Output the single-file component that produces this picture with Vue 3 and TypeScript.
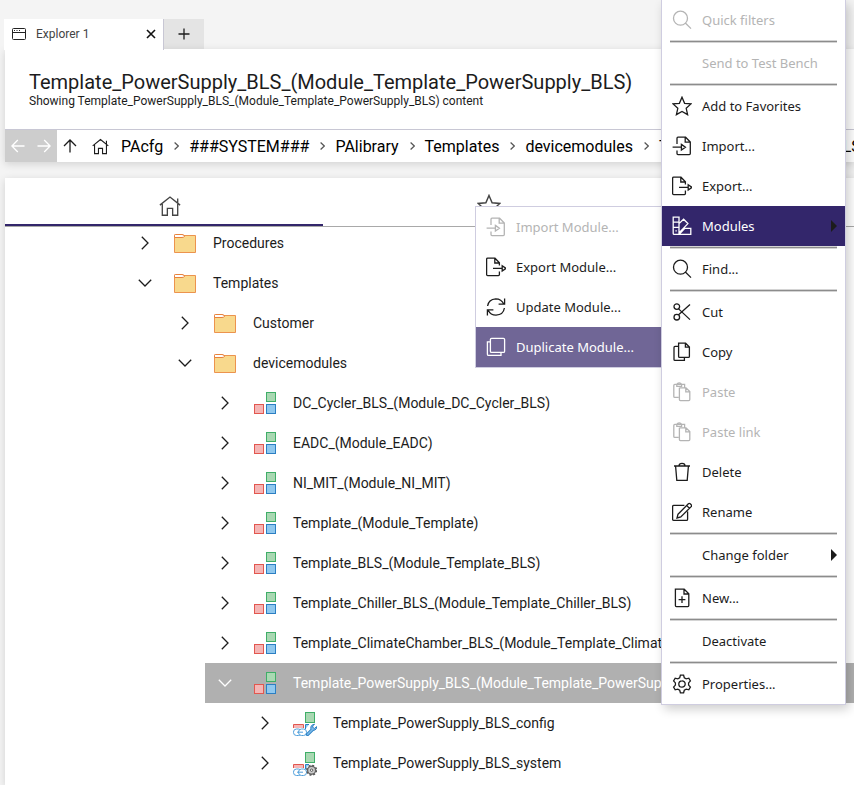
<script setup lang="ts">
type IconName =
  | 'search' | 'star' | 'import' | 'export' | 'swatch' | 'cut' | 'copy' | 'paste'
  | 'trash' | 'rename' | 'new' | 'gear' | 'refresh' | 'duplicate' | 'home'

interface MenuEntry {
  label?: string
  icon?: IconName
  disabled?: boolean
  active?: boolean
  arrow?: boolean
  separator?: boolean
}

interface TreeNode {
  label: string
  level: number
  open?: boolean
  selected?: boolean
  icon: 'folder' | 'module' | 'config' | 'system'
}

const iconPaths: Record<IconName, string> = {
  search: 'M8.5 1.2a7 7 0 1 0 0 14a7 7 0 1 0 0-14M13.6 13.2L19 18.6',
  star: 'M10 1.2L12.6 7.3L19 7.9L14.2 12.3L15.6 18.6L10 15.4L4.4 18.6L5.8 12.3L1 7.9L7.4 7.3Z',
  import: 'M5 8V2.2Q5 1.2 6 1.2H13.6L18.3 6V17.6Q18.3 18.6 17.3 18.6H6Q5 18.6 5 17.6V14.4M13.2 1.4V6.2H18.2M.6 11.2H9.2M9.4 8.4L13.4 11.2L9.4 14Z',
  export: 'M13.4 8.6V5.8L9 1.2H1.6Q.6 1.2 .6 2.2V17.6Q.6 18.6 1.6 18.6H12.4Q13.4 18.6 13.4 17.6V14.4M8.8 1.4V6H13.2M7 11.4H16M16.2 8.8L20 11.4L16.2 14Z',
  swatch: 'M1.2 1.2H7V18.4H2.2Q1.2 18.4 1.2 17.4ZM1.2 6.2H7M1.2 11.4H7M3.4 14.8H4.8M7 7.6L11.6 3.2L15.9 7.6L7.2 16.8M7.2 18.4H18.8V12.4H11.6M7.2 18.4L12.8 12.4',
  cut: 'M4.8 1.8a2.8 2.8 0 1 0 0 5.6a2.8 2.8 0 1 0 0-5.6M4.8 12.4a2.8 2.8 0 1 0 0 5.6a2.8 2.8 0 1 0 0-5.6M6.6 6.9L18 17.6M6.6 12.8L18 2.4',
  copy: 'M6.6 1.2H13.6L17.4 5V14.4Q17.4 15.4 16.4 15.4H7.6Q6.6 15.4 6.6 14.4ZM13.4 1.4V5.2H17.2M6.4 4.4H3Q2 4.4 2 5.4V17.4Q2 18.4 3 18.4H12.4V15.6',
  paste: 'M6.6 15.4H2.8Q1.8 15.4 1.8 14.4V3.4Q1.8 2.4 2.8 2.4H12.6V5.2M4.8 2.4V4.4H9.6V2.4Q8.8 .8 7.2 .8T4.8 2.4M7.4 5.8H14L17.8 9.6V17.6Q17.8 18.6 16.8 18.6H8.4Q7.4 18.6 7.4 17.6V5.8M13.8 6V9.8H17.6',
  trash: 'M2 4H18M7 3.8Q7 1.4 10 1.4T13 3.8M3.6 4.2L4.8 18.4H15.2L16.4 4.2',
  rename: 'M12.4 3.4H1.8Q.6 3.4 .6 4.6V17.2Q.6 18.4 1.8 18.4H14.4Q15.6 18.4 15.6 17.2V9.4M6 12.2L16.4 1.8Q17.2 1 18.2 1.8L19.2 2.8Q20 3.8 19.2 4.6L8.8 15L5 16ZM14.8 3.6L17.4 6.2',
  new: 'M3.4 1.2H12.2L16.8 5.8V17.6Q16.8 18.6 15.8 18.6H4.4Q3.4 18.6 3.4 17.6ZM12 1.4V6H16.6M10 8.2V15M6.6 11.6H13.4',
  gear: 'M8.4 1.2H11.6L12.3 3.7L14.2 4.8L16.8 4.2L18.4 7L16.6 8.9V11.1L18.4 13L16.8 15.8L14.2 15.2L12.3 16.3L11.6 18.8H8.4L7.7 16.3L5.8 15.2L3.2 15.8L1.600 13L3.400 11.100V8.900L1.600 7L3.200 4.200L5.800 4.800L7.700 3.700ZM10 6.800a3.200 3.200 0 1 0 0 6.400a3.200 3.200 0 1 0 0-6.400',
  refresh: 'M1.6 9Q2.4 2.4 9.8 1.8Q15.4 1.8 17.8 7M18.6 1.4V7.2H12.6M18.4 11Q17.4 17.8 10 18.2Q4.6 18.2 2 13M1.4 18.6V12.8H7.4',
  duplicate: 'M5.6 1.4H17.4Q18.6 1.4 18.6 2.6V14.2Q18.6 15.4 17.4 15.4H5.6Q4.4 15.4 4.4 14.2V2.6Q4.4 1.4 5.6 1.4M4.2 4.8H1.4V17.2Q1.4 18.4 2.6 18.4H15V15.6',
  home: 'M.8 9.2L10 1.8L19.2 9.200M3 7.600V18.400H7.600V12.200H12.400V18.400H17V7.600M17 7V3.200'
}

const crumbs: string[] = [
  'PAcfg', '###SYSTEM###', 'PAlibrary', 'Templates', 'devicemodules', 'Template_PowerSupply_BLS'
]

const nodes: TreeNode[] = [
  { label: 'Procedures', level: 0, icon: 'folder' },
  { label: 'Templates', level: 0, open: true, icon: 'folder' },
  { label: 'Customer', level: 1, icon: 'folder' },
  { label: 'devicemodules', level: 1, open: true, icon: 'folder' },
  { label: 'DC_Cycler_BLS_(Module_DC_Cycler_BLS)', level: 2, icon: 'module' },
  { label: 'EADC_(Module_EADC)', level: 2, icon: 'module' },
  { label: 'NI_MIT_(Module_NI_MIT)', level: 2, icon: 'module' },
  { label: 'Template_(Module_Template)', level: 2, icon: 'module' },
  { label: 'Template_BLS_(Module_Template_BLS)', level: 2, icon: 'module' },
  { label: 'Template_Chiller_BLS_(Module_Template_Chiller_BLS)', level: 2, icon: 'module' },
  { label: 'Template_ClimateChamber_BLS_(Module_Template_Climat', level: 2, icon: 'module' },
  { label: 'Template_PowerSupply_BLS_(Module_Template_PowerSup', level: 2, open: true, selected: true, icon: 'module' },
  { label: 'Template_PowerSupply_BLS_config', level: 3, icon: 'config' },
  { label: 'Template_PowerSupply_BLS_system', level: 3, icon: 'system' }
]

const menu: MenuEntry[] = [
  { label: 'Quick filters', icon: 'search', disabled: true },
  { separator: true },
  { label: 'Send to Test Bench', disabled: true },
  { separator: true },
  { label: 'Add to Favorites', icon: 'star' },
  { label: 'Import...', icon: 'import' },
  { label: 'Export...', icon: 'export' },
  { label: 'Modules', icon: 'swatch', active: true, arrow: true },
  { separator: true },
  { label: 'Find...', icon: 'search' },
  { separator: true },
  { label: 'Cut', icon: 'cut' },
  { label: 'Copy', icon: 'copy' },
  { label: 'Paste', icon: 'paste', disabled: true },
  { label: 'Paste link', icon: 'paste', disabled: true },
  { label: 'Delete', icon: 'trash' },
  { label: 'Rename', icon: 'rename' },
  { separator: true },
  { label: 'Change folder', arrow: true },
  { separator: true },
  { label: 'New...', icon: 'new' },
  { separator: true },
  { label: 'Deactivate' },
  { separator: true },
  { label: 'Properties...', icon: 'gear' }
]

const submenu: MenuEntry[] = [
  { label: 'Import Module...', icon: 'import', disabled: true },
  { label: 'Export Module...', icon: 'export' },
  { label: 'Update Module...', icon: 'refresh' },
  { label: 'Duplicate Module...', icon: 'duplicate', active: true }
]
</script>

<template>
  <div class="page">
    <div class="tabstrip">
      <div class="doc-tab">
        <svg class="win" viewBox="0 0 14 12" width="14" height="12">
          <rect x=".5" y=".5" width="13" height="11" rx="1" />
          <path d="M.5 4.5H13.5M2 2.5H3M4.5 2.5H5.5M7 2.5H8" />
        </svg>
        <span class="doc-name">Explorer 1</span>
        <button class="bare" type="button" aria-label="Close tab">
          <svg class="close" viewBox="0 0 10 10" width="10" height="10"><path d="M1 1L9 9M9 1L1 9" /></svg>
        </button>
      </div>
      <button class="add" type="button" aria-label="New tab">
        <svg viewBox="0 0 12 12" width="12" height="12"><path d="M6 .5V11.5M.5 6H11.5" /></svg>
      </button>
    </div>

    <header class="card head">
      <div class="titles">
        <h1>Template_PowerSupply_BLS_(Module_Template_PowerSupply_BLS)</h1>
        <p>Showing Template_PowerSupply_BLS_(Module_Template_PowerSupply_BLS) content</p>
      </div>
      <nav class="path">
        <div class="history">
          <button class="bare" type="button" disabled aria-label="Back">
            <svg viewBox="0 0 14 14" width="14" height="14"><path d="M13.5 7H1M6.8 1L.9 7L6.8 13" /></svg>
          </button>
          <button class="bare" type="button" disabled aria-label="Forward">
            <svg viewBox="0 0 14 14" width="14" height="14"><path d="M.5 7H13M7.2 1L13.1 7L7.2 13" /></svg>
          </button>
        </div>
        <button class="bare up" type="button" aria-label="Up">
          <svg viewBox="0 0 14 14" width="14" height="14"><path d="M7 13.5V1.2M1 7L7 1L13 7" /></svg>
        </button>
        <button class="bare root" type="button" aria-label="Home">
          <svg viewBox="0 0 20 20" width="17" height="17"><path :d="iconPaths.home" /></svg>
        </button>
        <ol>
          <li v-for="(c, i) in crumbs" :key="c">
            <a href="#">{{ c }}</a>
            <svg v-if="i < crumbs.length - 1" class="sep" viewBox="0 0 5 8" width="5" height="8"><path d="M.6 .5L4.3 4L.6 7.5" /></svg>
          </li>
        </ol>
      </nav>
    </header>

    <main class="card body">
      <div class="view-tabs">
        <button class="view-tab current" type="button" aria-label="Home view">
          <svg viewBox="0 0 20 20" width="22" height="22"><path :d="iconPaths.home" /></svg>
        </button>
        <button class="view-tab" type="button" aria-label="Favorites view">
          <svg viewBox="0 0 20 20" width="24" height="24"><path :d="iconPaths.star" /></svg>
        </button>
      </div>
      <ul class="tree">
        <li v-for="n in nodes" :key="n.label" :class="['node', 'level-' + n.level, { selected: n.selected }]">
          <button class="bare twist" type="button" :aria-label="n.open ? 'Collapse' : 'Expand'">
            <svg v-if="n.open" viewBox="0 0 14 8" width="14" height="8"><path d="M.8 .8L7 7L13.2 .8" /></svg>
            <svg v-else viewBox="0 0 8 14" width="8" height="14"><path d="M.8 .8L7 7L.8 13.2" /></svg>
          </button>
          <svg v-if="n.icon === 'folder'" class="pic" viewBox="0 0 24 24" width="24" height="24">
            <path d="M1.5 20.5V3.5Q1.5 2.5 2.5 2.5H9Q10.5 2.5 11 3.5H22.5V20.5Z" fill="#f8d98d" stroke="#ec934e" />
            <path d="M1.5 5.5V3.5Q1.5 2.5 2.5 2.5H9Q11 2.5 11.5 4.5Q10.5 5.500 9 5.500Z" fill="#fff" stroke="#e8813c" />
          </svg>
          <svg v-else-if="n.icon === 'module'" class="pic" viewBox="0 0 24 24" width="24" height="24">
            <rect x="13.5" y=".5" width="9" height="9" fill="#a9d8b2" stroke="#3fae68" />
            <rect x="1.5" y="12.5" width="9" height="9" fill="#f4b6b6" stroke="#e2574f" />
            <rect x="13.5" y="12.5" width="9" height="9" fill="#90c8ee" stroke="#2b7fc3" />
          </svg>
          <svg v-else class="pic" viewBox="0 0 24 24" width="24" height="24">
            <rect x="12.5" y=".5" width="9" height="10" fill="#a9d8b2" stroke="#3fae68" />
            <path d="M.5 16V12.5H10.5V16" fill="#f4b6b6" stroke="#e2574f" />
            <path d="M12.5 17V12.5H16" fill="#90c8ee" stroke="#2b7fc3" />
            <g fill="#fff" stroke="#4f9fdb">
              <rect x=".5" y="17" width="8" height="6.5" rx="3" />
              <rect x="5.5" y="17" width="8" height="6.5" rx="3" />
              <path d="M4 20.2H10" />
            </g>
            <g v-if="n.icon === 'config'">
              <path d="M14.500 22.500L19.500 17.500" stroke="#2b7fc3" stroke-width="3.200" stroke-linecap="round" />
              <path d="M21.500 12.200Q17.500 12.800 17.800 16.500Q19 19.200 22 18Q24 17 23.700 14.600L21.500 16.400L19.800 15.500L19.700 14Z" fill="#7dbbe9" stroke="#2b7fc3" />
              <path d="M14.700 22.300L20 17" stroke="#7dbbe9" stroke-width="1.600" stroke-linecap="round" />
            </g>
            <g v-else>
              <circle cx="18.600" cy="18.200" r="4" fill="#ccc" stroke="#666" stroke-width="1.400" />
              <circle cx="18.600" cy="18.200" r="4.900" fill="none" stroke="#555" stroke-width="1.400" stroke-dasharray="2 1.850" />
              <circle cx="18.600" cy="18.200" r="1.200" fill="#fff" stroke="#555" />
            </g>
          </svg>
          <span>{{ n.label }}</span>
        </li>
      </ul>
    </main>

    <div class="menu submenu" role="menu">
      <button v-for="m in submenu" :key="m.label" type="button" role="menuitem" :disabled="m.disabled" :class="['item', { hover: m.active }]">
        <svg class="glyph" viewBox="0 0 20 20" width="20" height="20"><path :d="iconPaths[m.icon!]" /></svg>
        <span>{{ m.label }}</span>
      </button>
    </div>

    <div class="menu context" role="menu">
      <template v-for="(m, i) in menu" :key="i">
        <div v-if="m.separator" class="rule" role="separator"></div>
        <button v-else type="button" role="menuitem" :disabled="m.disabled" :class="['item', { opened: m.active }]">
          <svg class="glyph" viewBox="0 0 20 20" width="20" height="20"><path v-if="m.icon" :d="iconPaths[m.icon]" /></svg>
          <span>{{ m.label }}</span>
          <svg v-if="m.arrow" class="arrow" viewBox="0 0 6 12" width="6" height="12"><path d="M0 0L6 6L0 12Z" /></svg>
        </button>
      </template>
    </div>
  </div>
</template>

<style>
body {
  background: #f4f4f4;
}
</style>

<style scoped>
.page {
  position: relative;
  box-sizing: border-box;
  height: 100vh;
  overflow: hidden;
  padding: 19px 0 0 5px;
  display: flex;
  flex-direction: column;
  font-family: Roboto, "Liberation Sans", sans-serif;
  color: #1c1c1c;
  background: #f4f4f4;
}
svg {
  display: block;
  flex: none;
  fill: none;
  stroke: currentColor;
  stroke-width: 1.3;
}
button {
  font: inherit;
  color: inherit;
  border: 0;
}
.bare {
  flex: none;
  padding: 0;
  background: none;
}
.tabstrip {
  display: flex;
  height: 30px;
  margin-left: -1px;
}
.doc-tab {
  z-index: 1;
  box-sizing: border-box;
  display: flex;
  align-items: center;
  width: 160px;
  height: 31px;
  padding: 0 7px 1px 8px;
  border-right: 1px solid #c8c7d4;
  background: #fff;
  font-size: 12px;
  color: #444;
}
.win {
  stroke: #222;
  stroke-width: 1;
}
.doc-name {
  flex: 1;
  margin-left: 10px;
}
.close {
  stroke: #111;
  stroke-width: 1.6;
}
.add {
  display: grid;
  place-items: center;
  width: 40px;
  padding: 0;
  background: #e4e4e4;
}
.card {
  background: #fff;
  box-shadow: 0 2px 8px rgba(0, 0, 0, 0.14);
}
.titles {
  box-sizing: border-box;
  height: 80px;
  padding: 22px 24px 0;
  white-space: nowrap;
}
h1 {
  margin: 0;
  font-size: 20px;
  font-weight: 400;
  line-height: 23px;
}
p {
  margin: 0;
  font-size: 12px;
  line-height: 14px;
}
.path {
  display: flex;
  align-items: center;
  height: 32px;
  border-top: 1px solid #c8c7d4;
}
.history {
  flex: none;
  display: flex;
  align-items: center;
  justify-content: center;
  gap: 12px;
  width: 52px;
  height: 100%;
  background: #cdcdcd;
  color: #fff;
}
.up {
  margin-left: 6px;
}
.root {
  margin-left: 15px;
}
ol {
  display: flex;
  margin: 0;
  padding: 0 0 0 12px;
  list-style: none;
  font-size: 16px;
  white-space: nowrap;
}
li {
  display: flex;
  align-items: center;
}
a {
  color: #000;
  text-decoration: none;
}
.sep {
  margin: 0 10px 0 11px;
  stroke: #555;
  stroke-width: 1.2;
}
.body {
  flex: 1;
  margin-top: 16px;
}
.view-tabs {
  display: flex;
  height: 48px;
  border-bottom: 1px solid #a9a9a9;
}
.view-tab {
  box-sizing: border-box;
  display: grid;
  place-items: center;
  width: 37.5%;
  padding: 9px 0 0 12px;
  border-bottom: 2px solid transparent;
  background: none;
  color: #444;
}
.view-tab svg {
  stroke-width: 1.2;
}
.current {
  border-color: #33266b;
}
.tree {
  margin: 0;
  padding: 0;
  margin-top: -4px;
  list-style: none;
  font-size: 14px;
}
.node {
  height: 40px;
  white-space: nowrap;
}
.level-0 {
  margin-left: 120px;
}
.level-1 {
  margin-left: 160px;
}
.level-2 {
  margin-left: 200px;
}
.level-3 {
  margin-left: 240px;
}
.selected {
  background: #b0b0b0;
  color: #fff;
}
.twist {
  display: grid;
  place-items: center;
  width: 40px;
}
.pic {
  margin: 2px 0 0 8px;
  stroke-width: 1;
}
.pic + span {
  margin-left: 16px;
}
.menu {
  position: absolute;
  box-sizing: border-box;
  border: 1px solid #cfcde0;
  background: #fff;
  font-family: "Noto Sans", "Open Sans", sans-serif;
  font-size: 13px;
}
.submenu {
  top: 206px;
  right: 192px;
  width: 187px;
}
.context {
  top: 0;
  right: 8px;
  width: 185px;
  border-top: 0;
  box-shadow: 3px 4px 10px rgba(0, 0, 0, 0.2);
}
.item {
  display: flex;
  align-items: center;
  gap: 10px;
  width: 100%;
  height: 40px;
  padding: 0 8px 0 10px;
  background: none;
  text-align: left;
  white-space: nowrap;
}
.item span {
  flex: 1;
}
.item:disabled {
  color: #b4b4b4;
}
.opened {
  background: #33266b;
  color: #fff;
}
.hover {
  background: #706696;
  color: #fff;
}
.arrow {
  fill: #1c1c1c;
  stroke: none;
}
.rule {
  box-sizing: border-box;
  height: 3px;
  margin: 0 8px;
  border-top: 1px solid #d4d4d4;
  border-bottom: 1px solid #d4d4d4;
  background: #8c8c8c;
}
</style>
